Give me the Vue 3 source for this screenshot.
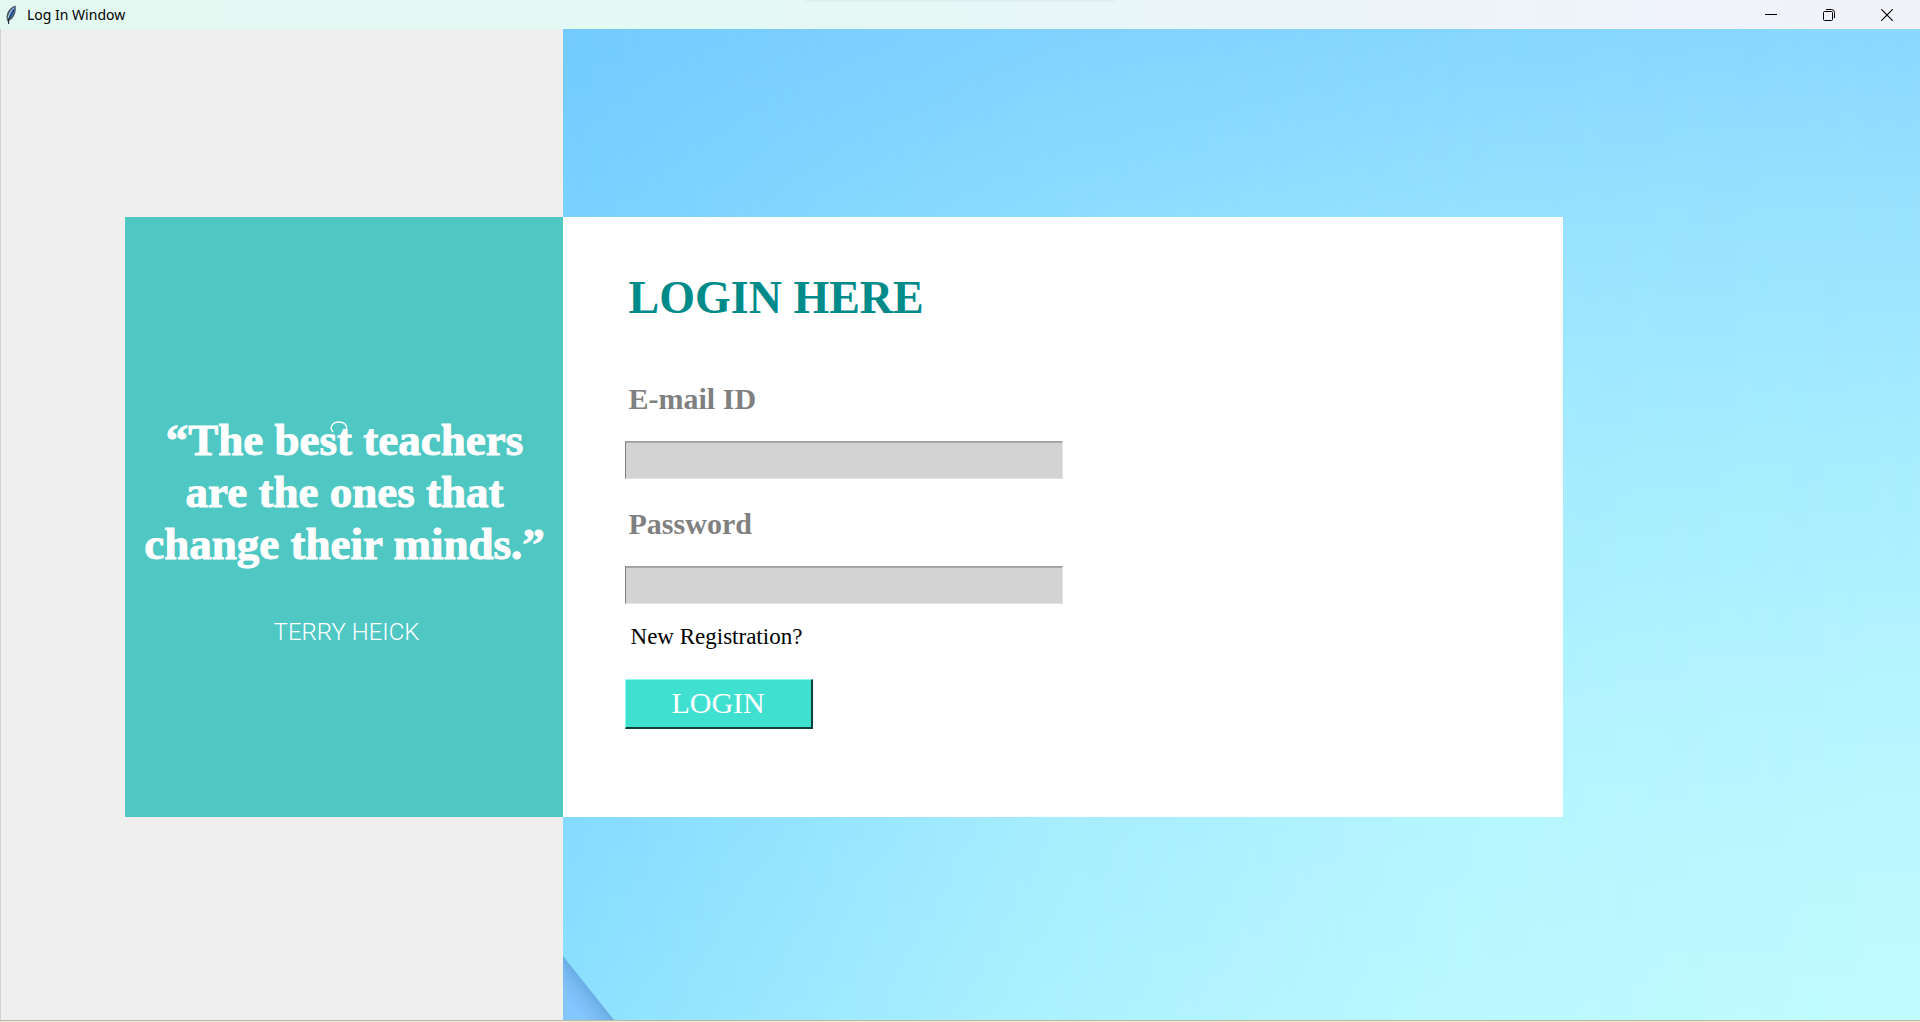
<script setup>
import { ref } from 'vue'

const email = ref('')
const password = ref('')
</script>

<template>
  <div class="window">
    <header class="titlebar">
      <svg class="feather" width="12" height="20" viewBox="0 0 12 20" aria-hidden="true">
        <path d="M10.6 0.6C7.5 1.4 3.4 4.6 2.2 8.6C1.4 11.4 1.3 13.4 2.2 15.2L3.6 19L4.4 15.6C6.8 14.6 9.2 11.6 10.2 8C10.9 5.2 11 2.6 10.6 0.6Z" fill="#4a545e" />
        <path d="M10 1.8C8 3 5.6 5.4 4.6 8.4C3.9 10.6 3.6 12.4 3.7 14C6 12.8 8 10.6 9 7.6C9.7 5.4 10.1 3.4 10 1.8Z" fill="#3f7fd0" />
        <path d="M8.8 2.8C6.4 4.8 3.8 8.6 3 13.4" fill="none" stroke="#b9cfe6" stroke-width="1" />
        <path d="M9 4.6C7.2 8.4 5 11.6 3.6 14.4L3.6 19" fill="none" stroke="#17202b" stroke-width="1" />
      </svg>
      <span class="title">Log In Window</span>
      <nav class="controls">
        <button type="button" aria-label="Minimize">
          <svg width="12" height="12" viewBox="0 0 12 12"><path d="M0 5.5H12" stroke="#000" /></svg>
        </button>
        <button type="button" aria-label="Restore">
          <svg width="12" height="12" viewBox="0 0 12 12" fill="none" stroke="#000">
            <rect x="0.5" y="2.5" width="9" height="9" rx="1" />
            <path d="M3 0.5H8.5Q11.5 0.5 11.5 3.5V9" />
          </svg>
        </button>
        <button type="button" aria-label="Close">
          <svg width="12" height="12" viewBox="0 0 12 12"><path d="M0.3 0.3L11.7 11.7M11.7 0.3L0.3 11.7" stroke="#000" stroke-width="1.2" /></svg>
        </button>
      </nav>
    </header>

    <main class="body">
      <aside class="side">
        <figure class="quote">
          <blockquote>
            “The be<span class="liga">st<svg width="18" height="12" viewBox="0 0 18 12" aria-hidden="true"><path d="M3 11C-1 7 2 1 9 1C15 1 18 5 16 10" fill="none" stroke="#fff" stroke-width="1.4" /></svg></span> teachers<br />are the ones that<br />change their minds.”
          </blockquote>
          <figcaption>TERRY HEICK</figcaption>
        </figure>
      </aside>

      <section class="backdrop">
        <form class="card" @submit.prevent>
          <h1>LOGIN HERE</h1>
          <div class="field">
            <label for="email">E-mail ID</label>
            <input id="email" v-model="email" type="text" />
          </div>
          <div class="field">
            <label for="password">Password</label>
            <input id="password" v-model="password" type="password" />
          </div>
          <a class="register" href="#">New Registration?</a>
          <button class="login" type="submit">LOGIN</button>
        </form>
        <svg class="fold" width="51" height="64" viewBox="0 0 51 64" aria-hidden="true">
          <defs>
            <linearGradient id="foldShade" gradientUnits="userSpaceOnUse" x1="25" y1="32" x2="6" y2="47">
              <stop offset="0" stop-color="#6aaee4" />
              <stop offset="0.5" stop-color="#7cbdf6" />
              <stop offset="1" stop-color="#84c6ff" />
            </linearGradient>
          </defs>
          <path d="M0 0L51 64H0Z" fill="url(#foldShade)" />
        </svg>
      </section>
    </main>
  </div>
</template>

<style>
body {
  margin: 0;
}
</style>

<style scoped>
.window {
  display: flex;
  flex-direction: column;
  box-sizing: border-box;
  min-height: 100vh;
  border-bottom: 1px solid #ece5c4;
  font-family: "Liberation Serif", "Times New Roman", serif;
}

.titlebar {
  position: relative;
  display: flex;
  align-items: center;
  height: 29px;
  padding: 0 4px 0 5px;
  background: linear-gradient(90deg, #e4f8f2 0%, #e4f8f5 40%, #e9f5f7 60%, #f0f3fb 88%, #f1f2f7 100%);
}

.titlebar::before {
  content: "";
  position: absolute;
  top: 0;
  left: 42%;
  width: 16%;
  height: 3px;
  background: linear-gradient(#dcebec, transparent);
}

.title {
  margin-left: 10px;
  font: 14px/20px "Noto Sans", "Open Sans", sans-serif;
  color: #000;
}

.controls {
  display: flex;
  margin-left: auto;
}

.controls button {
  display: flex;
  align-items: center;
  justify-content: center;
  width: 58px;
  height: 28px;
  padding: 0;
  border: 0;
  background: none;
}

.body {
  display: flex;
  flex: 1;
  border-bottom: 1px solid #b9bdb0;
}

.side {
  box-sizing: border-box;
  width: 29.3%;
  padding-top: 188px;
  border-left: 1px solid #d2d2d2;
  background: #efefef;
}

.quote {
  box-sizing: border-box;
  width: 78%;
  min-height: 600px;
  margin: 0 0 0 auto;
  padding: 197px 0 0 2px;
  background: #4fc7c3;
  color: #fff;
  text-align: center;
  white-space: nowrap;
}

blockquote {
  margin: 0;
  font-size: 45px;
  font-weight: bold;
  line-height: 52px;
  -webkit-text-stroke: 1px #fff;
}

.liga {
  position: relative;
}

.liga svg {
  position: absolute;
  top: 6px;
  left: 10px;
}

figcaption {
  margin-top: 47px;
  padding-left: 4px;
  font: 300 24px/30px Roboto, sans-serif;
}

.backdrop {
  position: relative;
  flex: 1;
  padding-top: 188px;
  background: linear-gradient(#73cbff 0%, #79d2ff 20%, #83daff 75%, #8de1ff 100%);
}

.backdrop::before {
  content: "";
  position: absolute;
  inset: 0;
  background: linear-gradient(#8ad7ff 0%, #98e2ff 18%, #a8edff 43%, #b3f4ff 64%, #bbf8ff 80%, #c0fbff 100%);
  mask-image: linear-gradient(90deg, transparent, rgba(0, 0, 0, 0.62) 36%, rgba(0, 0, 0, 0.9) 68%, #000);
}

.card {
  position: relative;
  box-sizing: border-box;
  display: flex;
  flex-direction: column;
  align-items: flex-start;
  width: 73.7%;
  min-height: 600px;
  padding: 55px 62px;
  background: #fff;
}

h1 {
  margin: 0 0 58px;
  padding-left: 4px;
  font-size: 46px;
  line-height: 52px;
  color: #008b8b;
}

.field {
  display: flex;
  flex-direction: column;
  gap: 25px;
  width: 50%;
  margin-bottom: 28px;
}

.field + .field {
  margin-bottom: 20px;
}

label {
  padding-left: 4px;
  font-size: 30px;
  font-weight: bold;
  line-height: 34px;
  color: #808080;
}

input {
  box-sizing: border-box;
  width: 100%;
  height: 38px;
  padding: 0 4px;
  border: 1px solid;
  border-color: #a0a0a0 #e3e3e3 #e3e3e3 #808080;
  border-radius: 0;
  outline: 0;
  background: #d3d3d3;
  box-shadow: inset 0 1px #a8a8a8;
  font: 22px/30px "Liberation Serif", serif;
}

.register {
  padding-left: 6px;
  font-size: 23px;
  line-height: 26px;
  color: #000;
  text-decoration: none;
}

.login {
  width: 188px;
  height: 50px;
  margin-top: 29px;
  padding: 0 0 2px;
  border: solid;
  border-width: 1px 2px 2px 1px;
  border-color: #8ffaf0 #14403c #14403c #8ffaf0;
  background: #40e0d0;
  font: 30px/34px "Liberation Serif", serif;
  color: #fff;
}

.fold {
  position: absolute;
  left: 0;
  bottom: 0;
}
</style>
